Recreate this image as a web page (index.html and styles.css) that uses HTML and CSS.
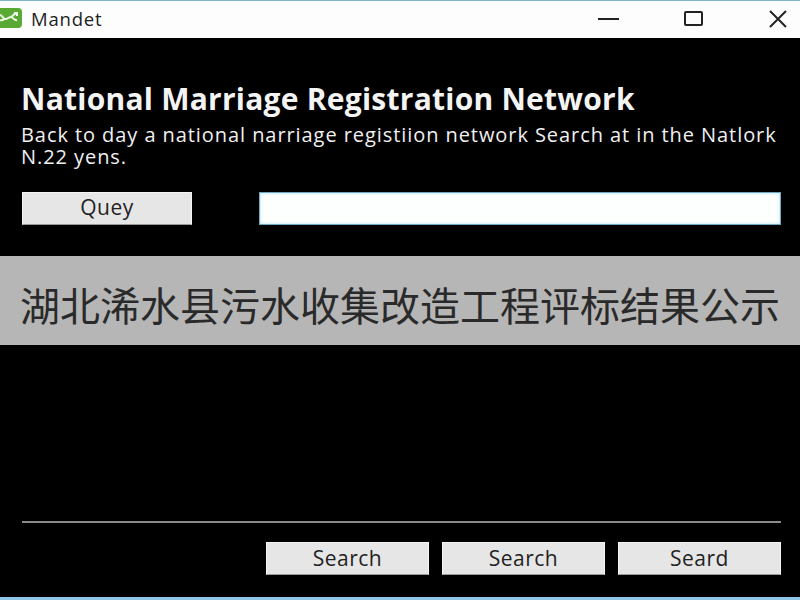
FILE: index.html
```html
<!DOCTYPE html>
<html lang="en">
<head>
<meta charset="utf-8">
<title>Mandet</title>
<link rel="stylesheet" href="styles.css">
</head>
<body>
<div class="window">
  <header class="titlebar">
    <div class="app">
      <svg class="logo" width="22" height="20" viewBox="0 0 22 20"><path d="M0 0H18a4 4 0 0 1 4 4V16a4 4 0 0 1-4 4H0Z" fill="#5aa935"/><path d="M0 7c3 0 3 5 6 4s3-2 5-2 3 4 6 3M0 12c2 1 3 0 4-1M11 9c2-1 3-3 5-4M14 5h3v3" fill="none" stroke="#eef8e6" stroke-width="2"/></svg>
      <span class="app-name">Mandet</span>
    </div>
    <div class="controls">
      <svg width="22" height="20" viewBox="0 0 22 20"><path d="M0 9H21" stroke="#222" stroke-width="2"/></svg>
      <svg width="20" height="20" viewBox="0 0 20 20"><rect x="1" y="2" width="17" height="13" rx="1" fill="none" stroke="#222" stroke-width="2"/></svg>
      <svg width="20" height="20" viewBox="0 0 20 20"><path d="M2 1L18 17M18 1L2 17" stroke="#222" stroke-width="2"/></svg>
    </div>
  </header>
  <main class="content">
    <h1 class="heading">National Marriage Registration Network</h1>
    <p class="intro">Back to day a national narriage registiion network Search at in the Natlork<br>N.22 yens.</p>
    <div class="query-row">
      <button class="btn query">Quey</button>
      <div class="field"></div>
    </div>
    <div class="spacer"></div>
    <hr class="rule">
    <div class="actions">
      <button class="btn action">Search</button>
      <button class="btn action">Search</button>
      <button class="btn action">Seard</button>
    </div>
  </main>
  <div class="banner"><span class="banner-text">湖北浠水县污水收集改造工程评标结果公示</span></div>
</div>
</body>
</html>
```
FILE: styles.css
```css
* { box-sizing: border-box; }
html, body { margin: 0; height: 100%; }
body { background: #000; font-family: "Open Sans", "Noto Sans", sans-serif; overflow: hidden; }
.window { position: relative; width: 800px; height: 600px; display: flex; flex-direction: column; background: #000; border-top: 1px solid #7fb4cc; border-bottom: 3px solid #8ec8e8; }
.titlebar { height: 37px; background: #fdfdfd; display: flex; align-items: center; justify-content: space-between; flex: none; }
.app { display: flex; align-items: center; gap: 9px; margin-top: -3px; }
.logo { display: block; }
.app-name { font-size: 18.5px; font-weight: 500; letter-spacing: 0.8px; color: #222; }
.controls { display: flex; align-items: center; padding-right: 12px; }
.controls svg { display: block; margin-left: 64px; }
.content { flex: 1; display: flex; flex-direction: column; padding: 42px 19px 22px 21px; color: #f2f2f2; }
.heading { margin: 0; font-size: 30px; line-height: 38px; font-weight: 700; white-space: nowrap; color: #f4f4f4; letter-spacing: 0.24px; }
.intro { margin: 6px 0 0; font-size: 20px; line-height: 22px; letter-spacing: 0.93px; color: #f0f0f0; white-space: nowrap; }
.query-row { display: flex; align-items: stretch; gap: 67px; margin-top: 24px; height: 33px; padding-left: 1px; }
.btn { font-family: "Open Sans", "Noto Sans", sans-serif; background: #e6e6e6; color: #222; border: 1px solid #f4f4f4; border-bottom-color: #999; border-radius: 0; padding: 0 0 2px; font-size: 21px; letter-spacing: 0.5px; }
.query { width: 170px; padding-bottom: 3px; }
.field { flex: 1; background: #fdfefe; border: 1px solid #6fa8c4; box-shadow: inset 0 0 3px #a8e0f4; }
.spacer { flex: 1; }
.rule { height: 2px; margin: 0 0 0 1px; border: 0; background: #8a8a8a; }
.actions { display: flex; justify-content: flex-end; gap: 13px; margin-top: 19px; height: 33px; }
.action { width: 163px; }
.banner { position: absolute; left: 0; right: 0; top: 255px; height: 89px; background: #b6b6b6; color: #2a2a2a; display: flex; align-items: center; justify-content: center; font-family: "Noto Sans CJK SC", sans-serif; font-size: 40px; white-space: nowrap; }
.banner-text { position: relative; top: 3px; }
```
